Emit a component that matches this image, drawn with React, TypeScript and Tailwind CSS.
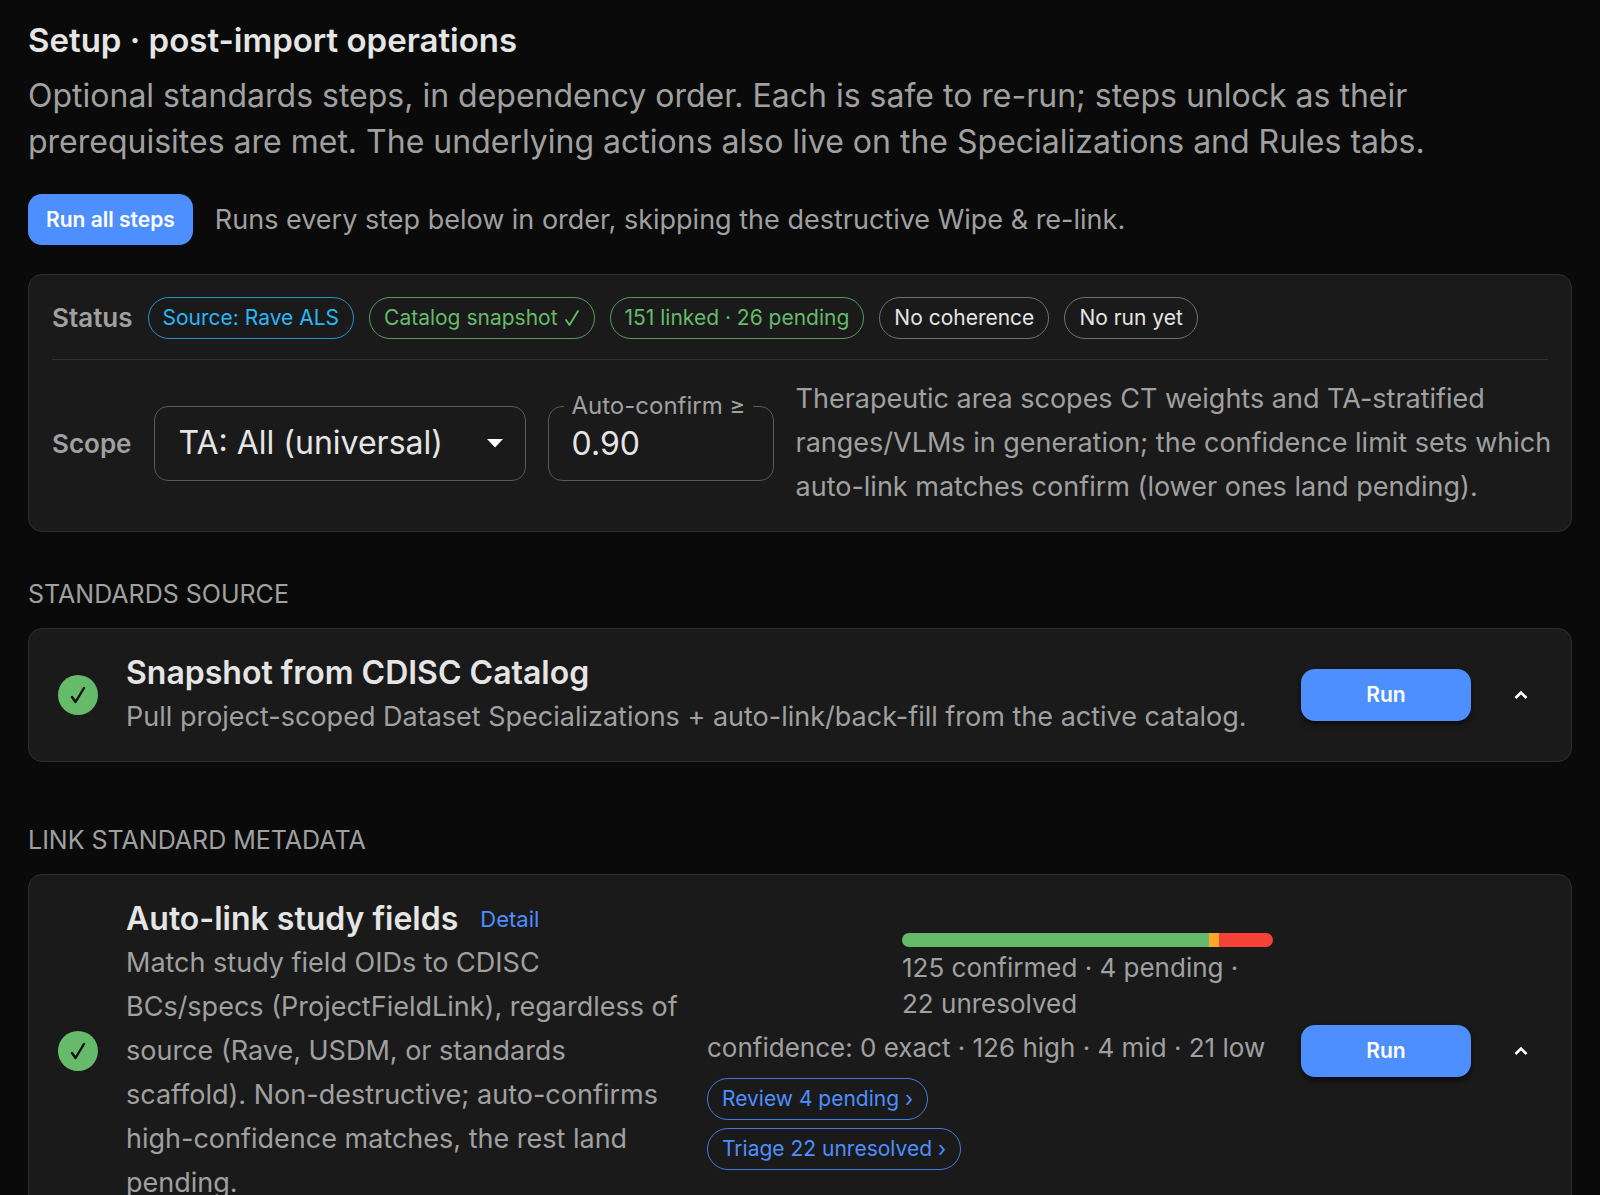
import { useState } from "react";
import type { ReactNode } from "react";
import clsx from "clsx";

type Tone = "info" | "success" | "neutral" | "action";

const chipTones: Record<Tone, string> = {
  info: "border-[#2791c5] text-[#29b6f6]",
  success: "border-[#559a59] text-[#66bb6a]",
  neutral: "border-[#707070] text-[#e5e5e5]",
  action: "border-[#437bda] text-[#4d8fff]",
};

const chipBase = "inline-flex h-[42px] items-center whitespace-nowrap rounded-full border px-[14px] text-[21px]";

const statuses: { label: string; tone: Tone; done?: boolean }[] = [
  { label: "Source: Rave ALS", tone: "info" },
  { label: "Catalog snapshot", tone: "success", done: true },
  { label: "151 linked · 26 pending", tone: "success" },
  { label: "No coherence", tone: "neutral" },
  { label: "No run yet", tone: "neutral" },
];

const linkCounts = [
  { label: "confirmed", count: 125, color: "bg-[#66bb6a]" },
  { label: "pending", count: 4, color: "bg-[#ffa726]" },
  { label: "unresolved", count: 22, color: "bg-[#f44336]" },
];

const Card = ({ children, className }: { children: ReactNode; className?: string }) => (
  <div className={clsx("rounded-[14px] border border-[#2e2e2e] bg-[#1a1a1a]", className)}>{children}</div>
);

const SectionLabel = ({ children }: { children: ReactNode }) => (
  <h2 className="text-[25px] leading-[40px] text-[#a0a0a0]">{children}</h2>
);

const CheckMark = ({ strokeWidth }: { strokeWidth: number }) => (
  <svg
    width="16"
    height="18"
    viewBox="0 0 16 18"
    fill="none"
    stroke="currentColor"
    strokeWidth={strokeWidth}
    strokeLinecap="round"
    strokeLinejoin="round"
    aria-hidden="true"
  >
    <path d="M2 11 5.5 16 14 2" />
  </svg>
);

const CountBar = () => {
  const total = linkCounts.reduce((sum, c) => sum + c.count, 0);
  return (
    <div className="flex h-[14px] overflow-hidden rounded-[7px]">
      {linkCounts.map((c) => (
        <div key={c.label} className={c.color} style={{ width: `${(c.count / total) * 100}%` }} />
      ))}
    </div>
  );
};

type StepCardProps = {
  title: string;
  description: string;
  detail?: boolean;
  children?: ReactNode;
};

const StepCard = ({ title, description, detail, children }: StepCardProps) => (
  <Card className="flex items-center gap-7 py-[22px] pr-7 pl-[29px]">
    <span
      role="img"
      aria-label="Done"
      className="flex size-10 shrink-0 items-center justify-center rounded-full bg-[#66bb6a] text-[#111111]"
    >
      <CheckMark strokeWidth={2.4} />
    </span>
    <div className="min-w-0 flex-1">
      <div className="flex items-center gap-[22px]">
        <h3 className="text-[32px] leading-[44px] font-semibold text-[#e5e5e5]">{title}</h3>
        {detail && (
          <button type="button" className="text-[22px] text-[#4d8fff]">
            Detail
          </button>
        )}
      </div>
      <p className="text-[27px] leading-[44px] text-[#a0a0a0]">{description}</p>
    </div>
    {children}
    <button
      type="button"
      className="h-[52px] w-[170px] shrink-0 rounded-[14px] bg-[#4d8fff] text-[21px] font-semibold text-white shadow-md shadow-black/50"
    >
      Run
    </button>
    <button type="button" aria-label="Collapse step" className="flex size-11 shrink-0 items-center justify-center text-white">
      <svg width="14" height="10" viewBox="0 0 14 10" fill="none" stroke="currentColor" strokeWidth="2.6">
        <path d="M1.5 8 7 2.5 12.5 8" />
      </svg>
    </button>
  </Card>
);

export default function App() {
  const [area, setArea] = useState("all");
  const [threshold, setThreshold] = useState("0.90");

  return (
    <main className="min-h-screen bg-[#0a0a0a] px-7 pt-4 pb-10 font-['Inter',sans-serif] text-[#e5e5e5]">
      <h1 className="text-[33px] leading-[48px] font-semibold">Setup · post-import operations</h1>
      <p className="mt-[9px] text-[32px] leading-[46px] text-[#a0a0a0]">
        Optional standards steps, in dependency order. Each is safe to re-run; steps unlock as their prerequisites are
        met. The underlying actions also live on the Specializations and Rules tabs.
      </p>

      <div className="mt-[29px] flex items-center gap-[22px]">
        <button
          type="button"
          className="h-[51px] shrink-0 rounded-[14px] bg-[#4d8fff] px-[18px] text-[21px] font-semibold text-white"
        >
          Run all steps
        </button>
        <p className="text-[27px] leading-[44px] text-[#a0a0a0]">
          Runs every step below in order, skipping the destructive Wipe &amp; re-link.
        </p>
      </div>

      <Card className="mt-[29px] px-[23px] py-[22px]">
        <div className="flex flex-wrap items-center gap-[15px] border-b border-[#303030] pb-5">
          <span className="text-[26px] leading-[42px] font-semibold text-[#a0a0a0]">Status</span>
          {statuses.map((s) => (
            <span key={s.label} className={clsx(chipBase, "gap-1.5", chipTones[s.tone])}>
              {s.label}
              {s.done && <CheckMark strokeWidth={1.8} />}
            </span>
          ))}
        </div>
        <div className="-mr-3 flex items-center gap-[22px] pt-[17px]">
          <label htmlFor="scope" className="text-[26px] font-semibold text-[#a0a0a0]">
            Scope
          </label>
          <div className="relative w-[372px] shrink-0">
            <select
              id="scope"
              value={area}
              onChange={(e) => setArea(e.target.value)}
              className="h-[75px] w-full appearance-none rounded-[14px] border border-[#595959] bg-[#1a1a1a] px-6 text-[32px] text-[#e5e5e5]"
            >
              <option value="all">TA: All (universal)</option>
            </select>
            <svg
              className="pointer-events-none absolute top-1/2 right-[22px] -translate-y-1/2"
              width="18"
              height="10"
              viewBox="0 0 18 10"
              fill="#ffffff"
            >
              <path d="M1 1h16L9 9.5z" />
            </svg>
          </div>
          <fieldset className="h-[75px] w-[226px] shrink-0 rounded-[14px] border border-[#595959] px-[15px]">
            <legend className="h-0 px-2 text-[24px] leading-[0px] whitespace-nowrap text-[#a0a0a0]">
              <label htmlFor="threshold">Auto-confirm ≥</label>
            </legend>
            <input
              id="threshold"
              inputMode="decimal"
              value={threshold}
              onChange={(e) => setThreshold(e.target.value)}
              className="h-[73px] w-full bg-transparent px-2 text-[32px] text-[#e5e5e5] outline-none"
            />
          </fieldset>
          <p className="text-[27px] leading-[44px] text-[#a0a0a0]">
            Therapeutic area scopes CT weights and TA-stratified ranges/VLMs in generation; the confidence limit sets
            which auto-link matches confirm (lower ones land pending).
          </p>
        </div>
      </Card>

      <section className="mt-[42px]">
        <SectionLabel>STANDARDS SOURCE</SectionLabel>
        <div className="mt-[14px]">
          <StepCard
            title="Snapshot from CDISC Catalog"
            description="Pull project-scoped Dataset Specializations + auto-link/back-fill from the active catalog."
          />
        </div>
      </section>

      <section className="mt-[58px]">
        <SectionLabel>LINK STANDARD METADATA</SectionLabel>
        <div className="mt-[14px]">
          <StepCard
            title="Auto-link study fields"
            detail
            description="Match study field OIDs to CDISC BCs/specs (ProjectFieldLink), regardless of source (Rave, USDM, or standards scaffold). Non-destructive; auto-confirms high-confidence matches, the rest land pending."
          >
            <div className="flex min-w-[566px] shrink-0 flex-col items-start gap-2">
              <div className="w-[371px] self-end">
                <CountBar />
                <p className="mt-[3px] text-[26px] leading-[36px] text-[#a0a0a0]">
                  {linkCounts.map((c) => `${c.count}\u00a0${c.label}`).join(" · ")}
                </p>
              </div>
              <p className="pb-1 text-[26px] leading-[36px] whitespace-nowrap text-[#a0a0a0]">
                confidence: 0 exact · 126 high · 4 mid · 21 low
              </p>
              <button type="button" className={clsx(chipBase, chipTones.action)}>
                Review 4 pending ›
              </button>
              <button type="button" className={clsx(chipBase, chipTones.action)}>
                Triage 22 unresolved ›
              </button>
            </div>
          </StepCard>
        </div>
      </section>
    </main>
  );
}
